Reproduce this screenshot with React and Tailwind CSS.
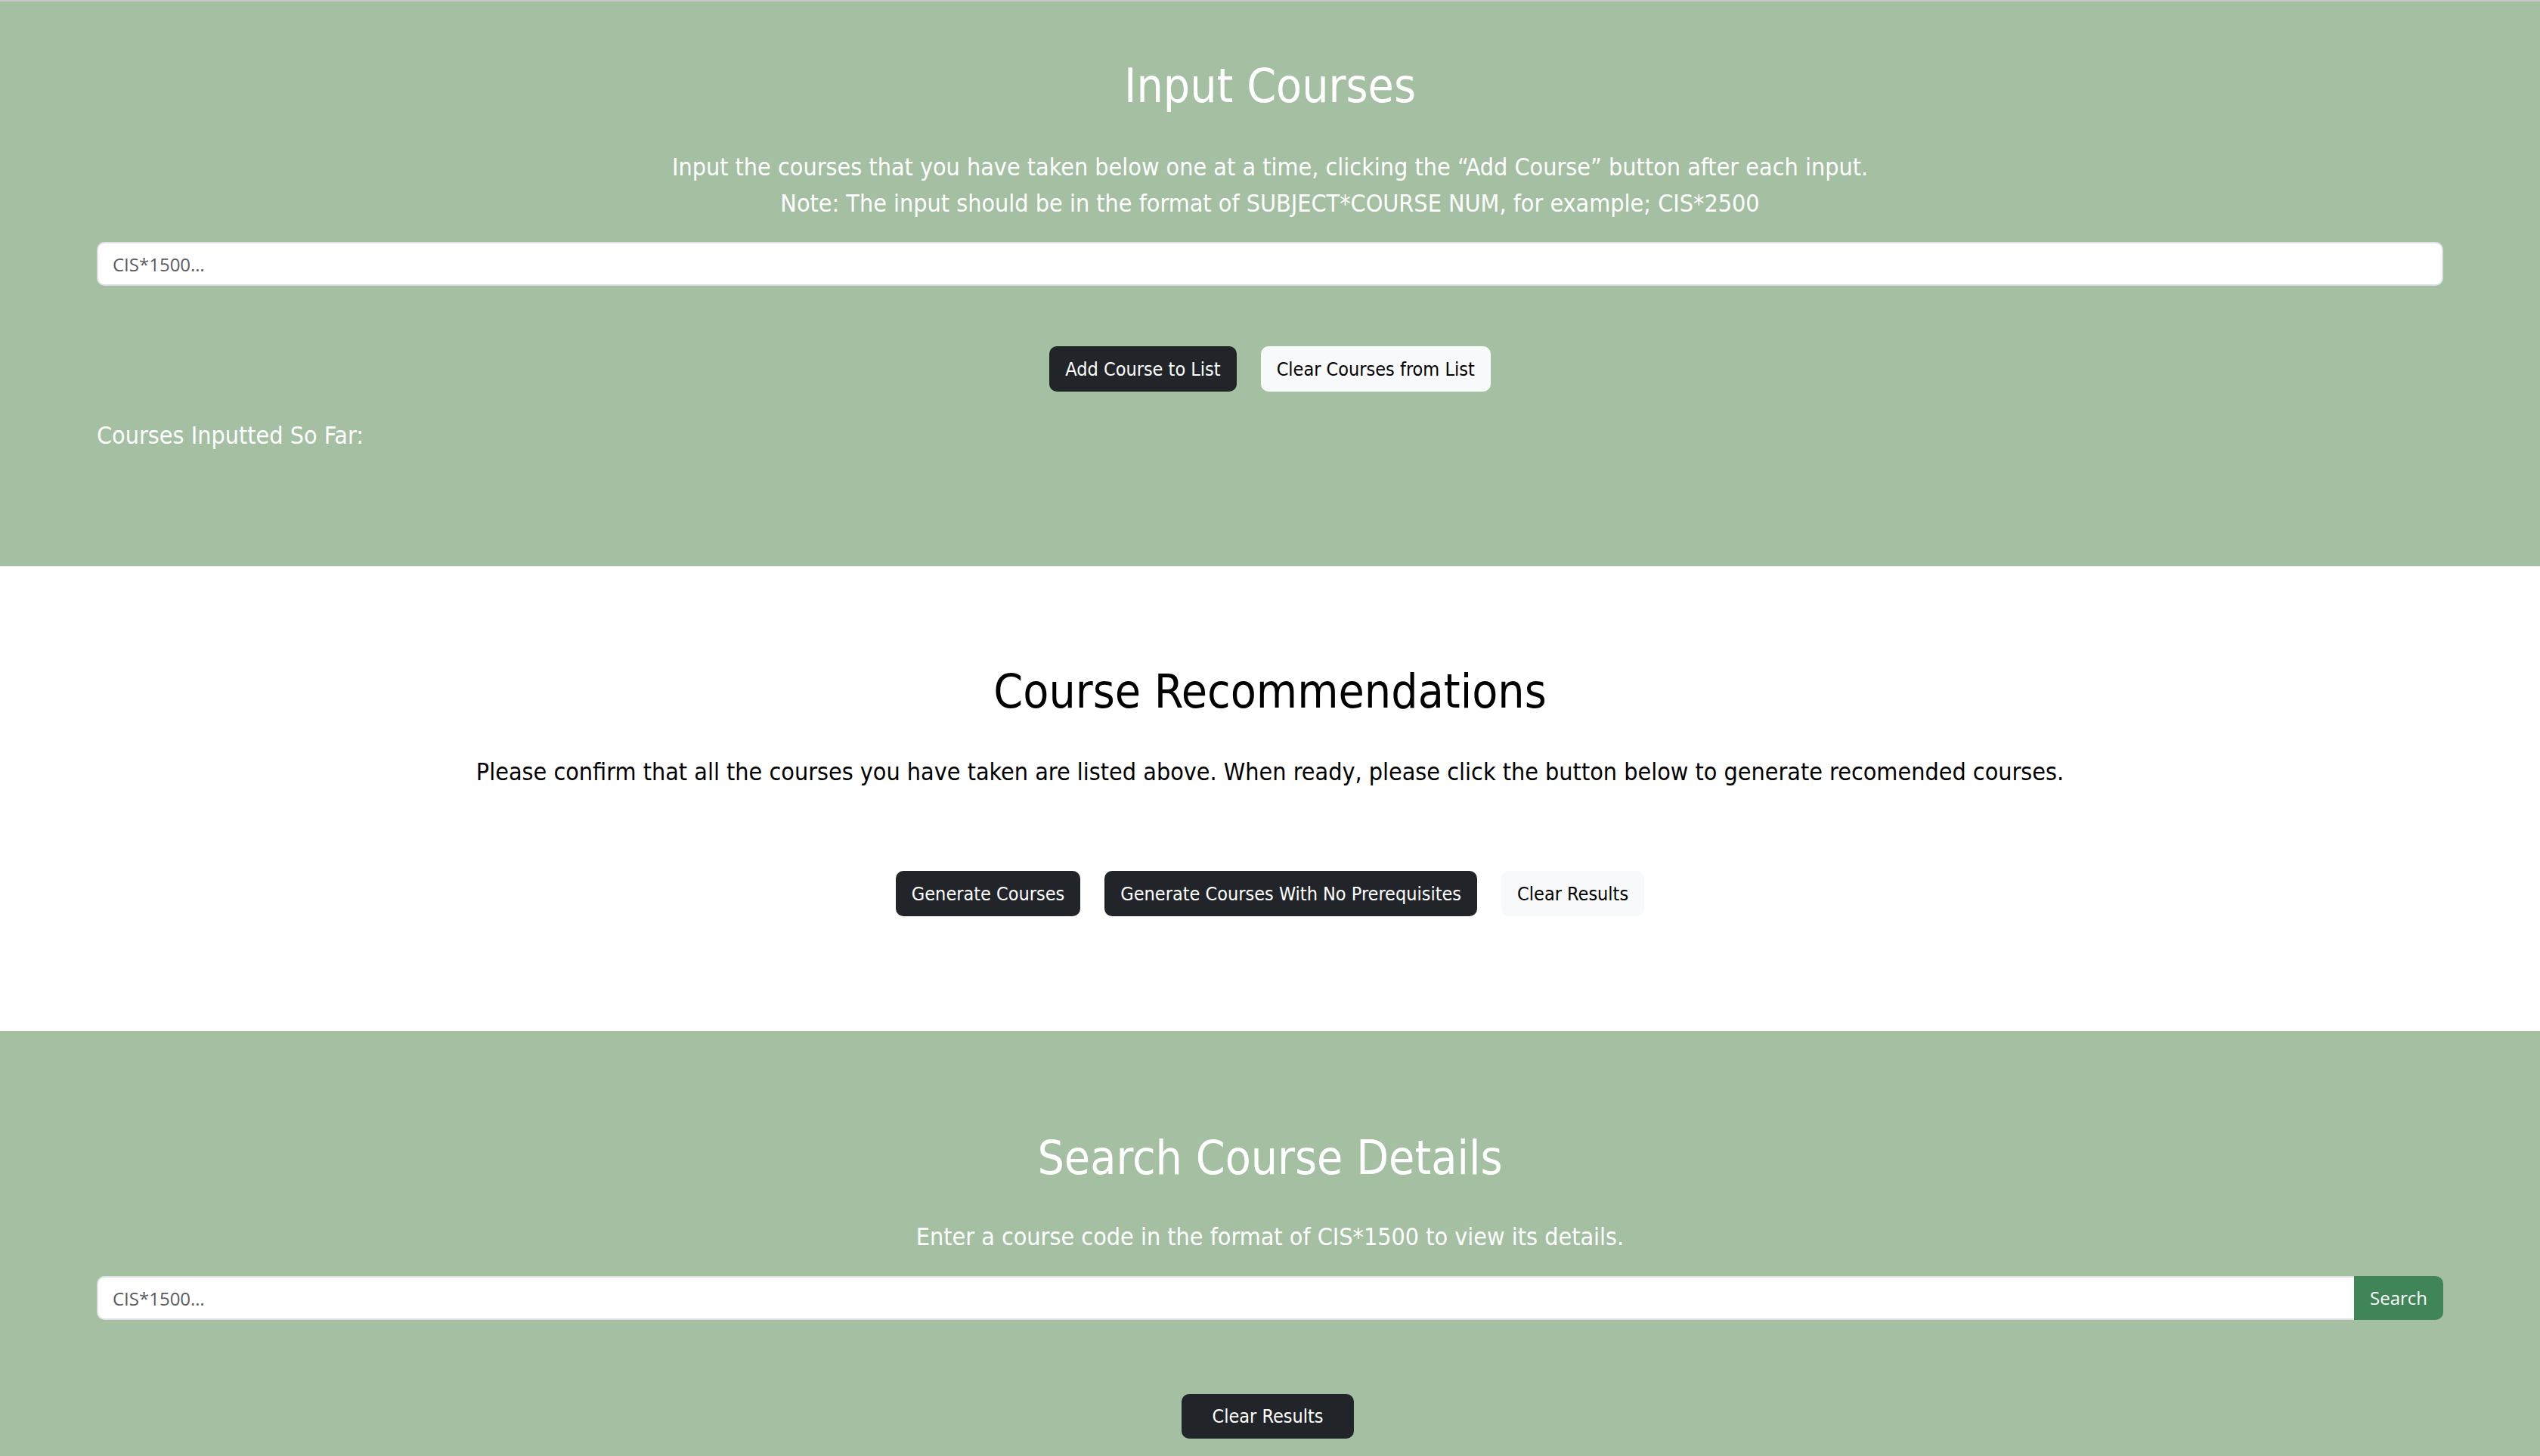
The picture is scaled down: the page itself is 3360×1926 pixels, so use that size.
import React from "react";

const font = "font-['DejaVu_Sans_Condensed','DejaVu_Sans',sans-serif]";
const darkBtn = "h-[60px] px-[21px] rounded-[10px] bg-[#212529] text-white text-[25px] leading-none";
const lightBtn = "h-[60px] px-[21px] rounded-[10px] bg-[#f8f9fa] text-black text-[25px] leading-none";

function CourseInput({ className = "" }) {
    return (
        <input
            placeholder="CIS*1500…"
            className={`block w-full h-[58px] border-2 border-[#dee2e6] bg-white px-[19px] text-[24px] text-[#212529] placeholder:text-[#595c5f] font-['Open_Sans',sans-serif] outline-none ${className}`}
        />
    );
}

export default function App() {
    return (
        <div className={`min-h-screen flex flex-col border-t-2 border-[#c8c8c8] bg-[#a4bfa2] ${font}`}>
            {/* Input Courses */}
            <section className="bg-[#a4bfa2] text-white px-[128px] pt-[73px] pb-[149px]">
                <h2 className="text-center text-[62px] leading-[77px]">Input Courses</h2>
                <p className="text-center text-[32px] leading-[48px] mt-[45px] mb-[27px]">
                    Input the courses that you have taken below one at a time, clicking the “Add Course” button after each input.
                    <br />
                    Note: The input should be in the format of SUBJECT*COURSE NUM, for example; CIS*2500
                </p>
                <CourseInput className="rounded-[10px]" />
                <div className="flex justify-center gap-[32px] mt-[80px]">
                    <button className={darkBtn}>Add Course to List</button>
                    <button className={lightBtn}>Clear Courses from List</button>
                </div>
                <p className="text-[32px] leading-[48px] mt-[34px]">Courses Inputted So Far:</p>
            </section>

            {/* Course Recommendations */}
            <section className="bg-white text-black px-[128px] pt-[127px] pb-[152px]">
                <h2 className="text-center text-[62px] leading-[77px]">Course Recommendations</h2>
                <p className="text-center text-[32px] leading-[48px] mt-[44px]">
                    Please confirm that all the courses you have taken are listed above. When ready, please click the button below to generate recomended courses.
                </p>
                <div className="flex justify-center gap-[32px] mt-[107px]">
                    <button className={darkBtn}>Generate Courses</button>
                    <button className={darkBtn}>Generate Courses With No Prerequisites</button>
                    <button className={`${lightBtn} px-[19px]`}>Clear Results</button>
                </div>
            </section>

            {/* Search Course Details */}
            <section className="flex-1 bg-[#a4bfa2] text-white px-[128px] pt-[129px] pb-[40px]">
                <h2 className="text-center text-[62px] leading-[77px]">Search Course Details</h2>
                <p className="text-center text-[32px] leading-[48px] mt-[42px] mb-[28px]">
                    Enter a course code in the format of CIS*1500 to view its details.
                </p>
                <div className="flex">
                    <CourseInput className="flex-1 rounded-l-[10px] border-r-0" />
                    <button className="h-[58px] w-[118px] shrink-0 rounded-r-[10px] bg-[#3f8558] text-white text-[24px] font-['Open_Sans',sans-serif]">
                        Search
                    </button>
                </div>
                <div className="flex justify-center mt-[98px] pr-[6px]">
                    <button className="h-[59px] px-[40px] rounded-[10px] bg-[#212529] text-white text-[25px] leading-none">
                        Clear Results
                    </button>
                </div>
            </section>
        </div>
    );
}
